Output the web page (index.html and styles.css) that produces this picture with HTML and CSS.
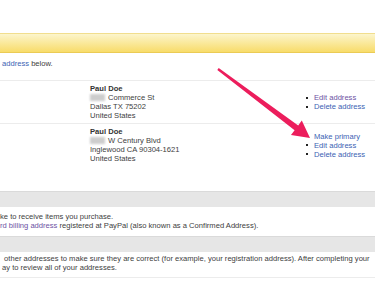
FILE: index.html
```html
<!DOCTYPE html>
<html lang="en">
<head>
    <meta charset="UTF-8">
    <meta name="viewport" content="width=device-width, initial-scale=1.0">
    <title>Addresses</title>
    <link rel="stylesheet" href="styles.css">
</head>
<body>
    <div class="page">
        <div class="top-space"></div>
        <div class="notice-bar"></div>
        <p class="intro"><a class="link">address</a> below.</p>

        <div class="addr-table">
            <div class="addr-row">
                <div class="addr">
                    <div class="name">Paul Doe</div>
                    <div><span class="redact"></span>Commerce St</div>
                    <div>Dallas TX 75202</div>
                    <div>United States</div>
                </div>
                <ul class="actions">
                    <li><a class="link visited">Edit address</a></li>
                    <li><a class="link">Delete address</a></li>
                </ul>
            </div>
            <div class="addr-row addr-row-last">
                <div class="addr">
                    <div class="name">Paul Doe</div>
                    <div><span class="redact"></span>W Century Blvd</div>
                    <div>Inglewood CA 90304-1621</div>
                    <div>United States</div>
                </div>
                <ul class="actions">
                    <li><a class="link">Make primary</a></li>
                    <li><a class="link">Edit address</a></li>
                    <li><a class="link">Delete address</a></li>
                </ul>
            </div>
        </div>

        <div class="band band-first"></div>
        <p class="note">ke to receive items you purchase.<br><a class="link visited">rd billing address</a> registered at PayPal (also known as a Confirmed Address).</p>
        <div class="band"></div>
        <p class="note note-last">&nbsp;other addresses to make sure they are correct (for example, your registration address). After completing your<br>ay to review all of your addresses.</p>

        <!-- annotation arrow -->
        <svg class="arrow" width="375" height="281" viewBox="0 0 375 281">
            <polygon points="218.7,68 298.2,125.4 301.8,120.6 310,138 291,135 294.6,130.2 217.3,70" fill="#ec1d5c"/>
        </svg>
    </div>
</body>
</html>
```

FILE: styles.css
```css
body, html {
    margin: 0;
    background: #fff;
}

.page {
    position: relative;
    width: 375px;
    height: 281px;
    overflow: hidden;
    font-family: 'Liberation Sans', Arial, sans-serif;
    font-size: 7.6px;
    line-height: 9px;
    color: #404040;
    white-space: nowrap;
}

.top-space {
    height: 33px;
}

.notice-bar {
    height: 18px;
    border-top: 1px solid #f1de8e;
    border-bottom: 1px solid #ebcb55;
    background: linear-gradient(to bottom, #fcf5cc, #f8dc6a);
}

.link {
    color: #3b62b3;
}

.link.visited {
    color: #6d52a3;
}

.intro {
    margin: 0;
    padding: 6px 0 12px 2px;
}

.addr-row {
    display: flex;
    align-items: center;
    border-top: 1px solid #ececec;
    padding: 3px 0;
}

.addr-row-last {
    padding-bottom: 9px;
}

.addr {
    align-self: flex-start;
    width: 216px;
    padding-left: 90px;
}

.name {
    font-weight: bold;
    color: #333;
}

.redact {
    display: inline-block;
    width: 15px;
    height: 7px;
    margin-right: 3px;
    vertical-align: -1px;
    background: #cdcdcd;
    filter: blur(1px);
}

.actions {
    list-style: none;
    margin: 0;
    padding: 0;
}

.actions li {
    display: flex;
    align-items: center;
}

.actions li::before {
    content: "";
    width: 2px;
    height: 2px;
    margin-right: 6px;
    background: #222;
}

.band {
    height: 15px;
    border-top: 1px solid #dadada;
    background: #e6e6e6;
}

.band-first {
    margin-top: 19px;
}

.note {
    margin: 0;
    padding: 5px 0 6px 0;
}

.note-last {
    padding: 2px 0 5px 2px;
    border-bottom: 1px solid #ececec;
}

.arrow {
    position: absolute;
    left: 0;
    top: 0;
    pointer-events: none;
}
```
